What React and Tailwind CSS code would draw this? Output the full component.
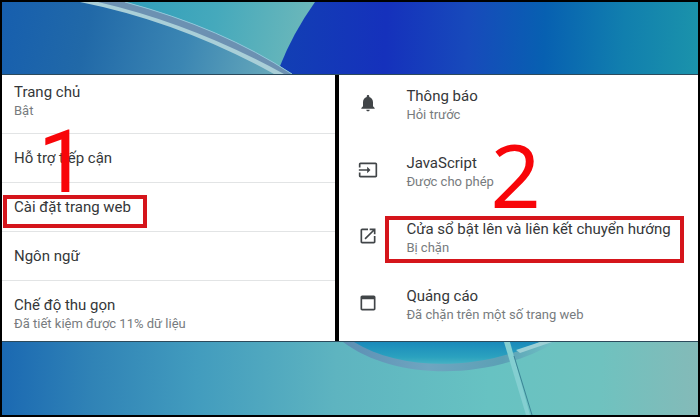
import React from "react";

const siteSettings = [
  { title: "Thông báo", detail: "Hỏi trước", icon: BellIcon },
  { title: "JavaScript", detail: "Được cho phép", icon: InputIcon, step: "2" },
  {
    title: "Cửa sổ bật lên và liên kết chuyển hướng",
    detail: "Bị chặn",
    icon: OpenIcon,
    marked: true,
  },
  { title: "Quảng cáo", detail: "Đã chặn trên một số trang web", icon: WindowIcon },
];

function BellIcon() {
  return (
    <svg viewBox="0 0 24 24" className="size-5" fill="currentColor" aria-hidden="true">
      <path d="M12 22c1.1 0 2-.9 2-2h-4c0 1.1.89 2 2 2zm6-6v-5c0-3.07-1.64-5.64-4.5-6.32V4c0-.83-.67-1.5-1.5-1.5s-1.5.67-1.5 1.5v.68C7.63 5.36 6 7.92 6 11v5l-2 2v1h16v-1l-2-2z" />
    </svg>
  );
}

function InputIcon() {
  return (
    <svg viewBox="0 0 24 24" className="size-5" fill="currentColor" aria-hidden="true">
      <path d="M21 3.01H3c-1.1 0-2 .9-2 2V9h2V4.99h18v14.03H3V15H1v4.01c0 1.1.9 1.98 2 1.98h18c1.1 0 2-.88 2-1.98v-14c0-1.11-.9-2-2-2zM11 16l4-4-4-4v3H1v2h10v3z" />
    </svg>
  );
}

function OpenIcon() {
  return (
    <svg viewBox="0 0 24 24" className="size-5" fill="currentColor" aria-hidden="true">
      <path d="M19 19H5V5h7V3H5c-1.11 0-2 .9-2 2v14c0 1.1.89 2 2 2h14c1.1 0 2-.9 2-2v-7h-2v7zM14 3v2h3.59l-9.83 9.83 1.41 1.41L19 6.41V10h2V3h-7z" />
    </svg>
  );
}

function WindowIcon() {
  return (
    <svg viewBox="0 0 24 24" className="size-5" fill="currentColor" aria-hidden="true">
      <path d="M19 3H5c-1.1 0-2 .9-2 2v14c0 1.1.9 2 2 2h14c1.1 0 2-.9 2-2V5c0-1.1-.9-2-2-2zm0 16H5V7.500h14V19z" />
    </svg>
  );
}

function TopWallpaper() {
  return (
    <svg
      viewBox="2 2 696 72"
      preserveAspectRatio="none"
      className="block h-[73px] w-full border-b border-[#2c4a5c]"
      aria-hidden="true"
    >
      <defs>
        <linearGradient id="sky" gradientUnits="userSpaceOnUse" x1="2" y1="20" x2="280" y2="80">
          <stop offset="0" stopColor="#175fae" />
          <stop offset="0.3" stopColor="#2169a8" />
          <stop offset="0.65" stopColor="#3b86b3" />
          <stop offset="1" stopColor="#6aabbb" />
        </linearGradient>
        <linearGradient id="teal" gradientUnits="userSpaceOnUse" x1="120" y1="2" x2="310" y2="40">
          <stop offset="0" stopColor="#2f9dba" />
          <stop offset="0.5" stopColor="#45a9bc" />
          <stop offset="1" stopColor="#6db8ba" />
        </linearGradient>
        <linearGradient id="deep" gradientUnits="userSpaceOnUse" x1="280" y1="60" x2="698" y2="74">
          <stop offset="0" stopColor="#123fb4" />
          <stop offset="0.25" stopColor="#1531bc" />
          <stop offset="0.45" stopColor="#174abb" />
          <stop offset="0.63" stopColor="#0760b1" />
          <stop offset="0.82" stopColor="#117fae" />
          <stop offset="1" stopColor="#1b93ab" />
        </linearGradient>
      </defs>
      <rect x="2" y="2" width="696" height="72" fill="url(#sky)" />
      <path d="M115 2H315Q294 33 281 67L292 74Q215 27 115 2Z" fill="url(#teal)" />
      <path d="M315 2H698V74H291L280 66Q293 33 315 2Z" fill="url(#deep)" />
      <path d="M80 2H125Q222 28 292 74H274Q180 22 80 2Z" fill="#a9cfd8" />
      <path d="M98 2H125Q222 28 292 74H284Q193 24 98 2Z" fill="#6c91b2" />
      <path d="M125 2Q222 28 292 74" fill="none" stroke="#8fc7da" strokeWidth="1" />
    </svg>
  );
}

function BottomWallpaper() {
  return (
    <svg
      viewBox="2 342 696 73"
      preserveAspectRatio="none"
      className="block h-[74px] w-full border-t border-[#2c4a5c]"
      aria-hidden="true"
    >
      <defs>
        <linearGradient id="sea" gradientUnits="userSpaceOnUse" x1="2" y1="370" x2="698" y2="390">
          <stop offset="0" stopColor="#1b69b2" />
          <stop offset="0.13" stopColor="#3083b6" />
          <stop offset="0.28" stopColor="#429cbe" />
          <stop offset="0.48" stopColor="#5eb4c0" />
          <stop offset="0.7" stopColor="#67c2c2" />
          <stop offset="0.86" stopColor="#6fc2bf" />
          <stop offset="1" stopColor="#84bab8" />
        </linearGradient>
        <linearGradient id="bowl" x1="0" y1="0" x2="0" y2="1">
          <stop offset="0" stopColor="#1a8abb" />
          <stop offset="0.7" stopColor="#2ba2bf" />
          <stop offset="1" stopColor="#45b2c3" />
        </linearGradient>
        <linearGradient id="rim" x1="0" y1="0" x2="1" y2="0">
          <stop offset="0" stopColor="#5c8fb4" />
          <stop offset="0.4" stopColor="#6fa5c0" />
          <stop offset="0.75" stopColor="#5ba0b5" />
          <stop offset="1" stopColor="#70c2c5" />
        </linearGradient>
      </defs>
      <rect x="2" y="342" width="696" height="73" fill="url(#sea)" />
      <path d="M343 342C395 381 490 381 556 342Z" fill="url(#rim)" />
      <path d="M354 342C400 371 480 371 540 342Z" fill="url(#bowl)" />
      <path d="M520 353L552 342H540L516 350Z" fill="#9ccfd5" />
      <path d="M504 342H510L530 415H526Z" fill="#84cfd1" />
      <path d="M514 356L532 415" stroke="#3c8496" strokeWidth="1" />
    </svg>
  );
}

function Entry({ title, detail }) {
  return (
    <span className="block whitespace-nowrap">
      <span className="block text-[15px] leading-5 text-[#353739]">{title}</span>
      {detail && <span className="block text-[13px] leading-[18px] text-[#777b7e]">{detail}</span>}
    </span>
  );
}

function MenuRow({ title, detail, className = "py-3.5", children }) {
  return (
    <li className="relative border-b border-[#e2e4e5] last:border-b-0">
      <button type="button" className={"block w-full px-3 text-left " + className}>
        <Entry title={title} detail={detail} />
      </button>
      {children}
    </li>
  );
}

function StepNumber({ className, children }) {
  return (
    <span
      className={
        "pointer-events-none absolute z-10 text-[88px] leading-none text-[#f80509] " + className
      }
    >
      {children}
    </span>
  );
}

export default function App() {
  return (
    <div className="border-2 border-black bg-black font-[Roboto,sans-serif]">
      <TopWallpaper />
      <main className="flex gap-1">
        <ul className="w-[47.9%] bg-white">
          <MenuRow title="Trang chủ" detail="Bật" className="pt-[7px] pb-[13px]" />
          <MenuRow title="Hỗ trợ tiếp cận">
            <StepNumber className="-top-4 left-9 font-[Roboto,sans-serif]">1</StepNumber>
          </MenuRow>
          <MenuRow title="Cài đặt trang web">
            <span className="pointer-events-none absolute top-3 left-px h-[33px] w-36 border-4 border-[#d5151b]" />
          </MenuRow>
          <MenuRow title="Ngôn ngữ" />
          <MenuRow title="Chế độ thu gọn" detail="Đã tiết kiệm được 11% dữ liệu" className="pt-3.5 pb-2" />
        </ul>
        <ul className="flex flex-1 flex-col bg-white">
          {siteSettings.map(({ title, detail, icon: Icon, step, marked }) => (
            <li key={title} className="relative flex-1">
              <button
                type="button"
                className="flex w-full items-start gap-7 pt-[11px] pl-[19px] text-left text-[#414548]"
              >
                <span className="pt-[7px]">
                  <Icon />
                </span>
                <Entry title={title} detail={detail} />
              </button>
              {step && (
                <StepNumber className="-top-3 left-[151px] font-['Noto_Sans',sans-serif]">{step}</StepNumber>
              )}
              {marked && (
                <span className="pointer-events-none absolute top-2 right-3.5 left-[46px] h-[47px] border-4 border-[#d5151b]" />
              )}
            </li>
          ))}
        </ul>
      </main>
      <BottomWallpaper />
    </div>
  );
}
